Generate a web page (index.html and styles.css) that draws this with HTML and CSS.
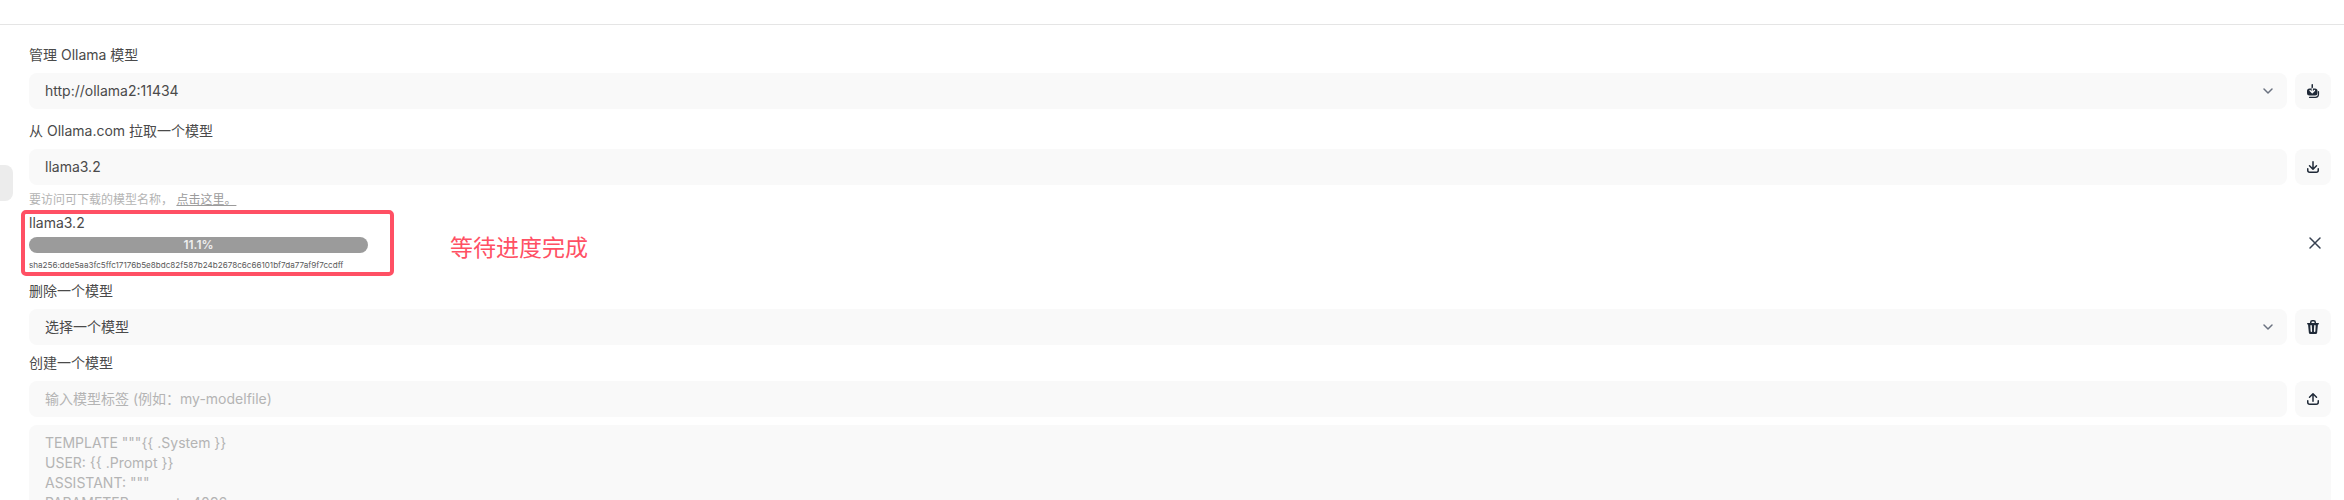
FILE: index.html
```html
<!DOCTYPE html>
<html lang="zh-CN">
<head>
    <meta charset="UTF-8">
    <title>Ollama 模型</title>
    <link rel="stylesheet" href="styles.css">
</head>
<body>
    <div class="topbar"></div>
    <div class="sideTab"></div>
    <div class="content">
        <div class="section">
            <div class="label">管理 Ollama 模型</div>
            <div class="row">
                <div class="field">
                    <span>http://ollama2:11434</span>
                    <svg class="chevron" viewBox="0 0 20 20"><path d="M6 8l4 4 4-4" fill="none" stroke="#6b7280" stroke-width="1.5" stroke-linecap="round" stroke-linejoin="round"/></svg>
                </div>
                <div class="iconBtn">
                    <svg viewBox="0 0 16 16">
                        <path d="M7.25 1a.75.75 0 0 0-.75.75V5.500h-2a2.500 2.500 0 0 0-2.500 2.500v2a2.500 2.500 0 0 0 2.500 2.500h5.500a2.500 2.500 0 0 0 2.500-2.500V8a2.500 2.500 0 0 0-2.500-2.500H8V1.750A.75.75 0 0 0 7.250 1Z"/>
                        <path d="M7.250 5.500v4M5 7.500l2.250 2.250L9.500 7.500" fill="none" stroke="#f9f9f9" stroke-width="1.300" stroke-linecap="round" stroke-linejoin="round"/>
                        <path d="M13.500 8.500v2.800c0 1.800-1.300 3-3 3H4.500" fill="none" stroke="#1f2937" stroke-width="1.200" stroke-linecap="round"/>
                    </svg>
                </div>
            </div>
        </div>
        <div class="section">
            <div class="label">从 Ollama.com 拉取一个模型</div>
            <div class="row">
                <div class="field"><span>llama3.2</span></div>
                <div class="iconBtn">
                    <svg viewBox="0 0 16 16"><path d="M8.75 2.750a.75.75 0 0 0-1.500 0v5.690L5.030 6.220a.75.75 0 0 0-1.060 1.060l3.500 3.500a.75.75 0 0 0 1.060 0l3.500-3.500a.75.75 0 0 0-1.060-1.060L8.750 8.440V2.750Z"/><path d="M3.500 9.750a.75.75 0 0 0-1.500 0v1.500A2.750 2.750 0 0 0 4.750 14h6.500A2.750 2.750 0 0 0 14 11.250v-1.500a.75.75 0 0 0-1.500 0v1.500c0 .690-.560 1.250-1.250 1.250h-6.500c-.690 0-1.250-.560-1.250-1.250v-1.500Z"/></svg>
                </div>
            </div>
            <div class="hint">要访问可下载的模型名称， <a>点击这里。</a></div>
        </div>
        <div class="progressRow">
            <div class="progressInfo">
                <div class="progressName">llama3.2</div>
                <div class="bar">11.1%</div>
                <div class="digest">sha256:dde5aa3fc5ffc17176b5e8bdc82f587b24b2678c6c66101bf7da77af9f7ccdff</div>
            </div>
            <div class="closeBtn">
                <svg viewBox="0 0 24 24"><path d="M6 6l12 12M18 6L6 18" fill="none" stroke="#374151" stroke-width="1.800" stroke-linecap="round"/></svg>
            </div>
            <div class="redBox"></div>
            <div class="note">等待进度完成</div>
        </div>
        <div class="section tight">
            <div class="label">删除一个模型</div>
            <div class="row">
                <div class="field">
                    <span>选择一个模型</span>
                    <svg class="chevron" viewBox="0 0 20 20"><path d="M6 8l4 4 4-4" fill="none" stroke="#6b7280" stroke-width="1.5" stroke-linecap="round" stroke-linejoin="round"/></svg>
                </div>
                <div class="iconBtn">
                    <svg viewBox="0 0 16 16"><path fill-rule="evenodd" d="M5 3.250V4H2.750a.75.75 0 0 0 0 1.500h.3l.815 8.150A1.500 1.500 0 0 0 5.357 15h5.285a1.500 1.500 0 0 0 1.493-1.350l.815-8.150h.3a.75.75 0 0 0 0-1.500H11v-.75A2.250 2.250 0 0 0 8.750 1h-1.500A2.250 2.250 0 0 0 5 3.250Zm2.250-.75a.75.75 0 0 0-.75.75V4h3v-.75a.75.75 0 0 0-.75-.75h-1.500ZM6.050 6a.75.75 0 0 1 .787.713l.275 5.500a.75.75 0 0 1-1.498.075l-.275-5.500A.75.75 0 0 1 6.050 6Zm3.900 0a.75.75 0 0 1 .712.787l-.275 5.500a.75.75 0 0 1-1.498-.075l.275-5.500a.75.75 0 0 1 .786-.711Z"/></svg>
                </div>
            </div>
        </div>
        <div class="section">
            <div class="label">创建一个模型</div>
            <div class="row">
                <div class="field placeholder"><span>输入模型标签 (例如：my-modelfile)</span></div>
                <div class="iconBtn">
                    <svg viewBox="0 0 16 16"><path d="M7.250 10.250a.75.75 0 0 0 1.500 0V4.560l2.220 2.220a.75.75 0 1 0 1.060-1.060l-3.500-3.500a.75.75 0 0 0-1.060 0l-3.500 3.500a.75.75 0 0 0 1.060 1.060l2.220-2.220v5.690Z"/><path d="M3.500 9.750a.75.75 0 0 0-1.500 0v1.500A2.750 2.750 0 0 0 4.750 14h6.500A2.750 2.750 0 0 0 14 11.250v-1.500a.75.75 0 0 0-1.500 0v1.500c0 .690-.560 1.250-1.250 1.250h-6.500c-.690 0-1.250-.560-1.250-1.250v-1.500Z"/></svg>
                </div>
            </div>
            <div class="template">TEMPLATE """{{ .System }}
USER: {{ .Prompt }}
ASSISTANT: """
PARAMETER num_ctx 4096</div>
        </div>
    </div>
</body>
</html>
```
FILE: styles.css
```css
*{
    margin: 0;
    padding: 0;
    box-sizing: border-box;
}
html,body{
    height: 500px;
    overflow: hidden;
}
body{
    position: relative;
    background-color: #fff;
    color: #4a4a4a;
    font-family: Inter, "Noto Sans CJK SC", sans-serif;
    font-size: 14px;
    line-height: 20px;
}
.topbar{
    height: 25px;
    border-bottom: 1px solid #e5e5e5;
}
.sideTab{
    position: absolute;
    left: 0;
    top: 165px;
    width: 13px;
    height: 36px;
    background-color: #ececec;
    border-radius: 0 8px 8px 0;
}
.content{
    padding: 20px 13px 0 29px;
}
.section{
    margin-bottom: 12px;
}
.tight{
    margin-bottom: 8px;
}
.label{
    margin-bottom: 8px;
}
.row{
    display: flex;
    gap: 8px;
}
.field{
    flex: 1;
    display: flex;
    align-items: center;
    justify-content: space-between;
    height: 36px;
    padding: 0 9px 0 16px;
    background-color: #f9f9f9;
    border-radius: 8px;
}
.placeholder{
    color: #b4b4b4;
}
.chevron{
    width: 20px;
    height: 20px;
}
.iconBtn{
    display: flex;
    align-items: center;
    justify-content: center;
    width: 36px;
    height: 36px;
    background-color: #f9f9f9;
    border-radius: 8px;
}
.iconBtn svg{
    width: 16px;
    height: 16px;
    fill: #1f2937;
}
.hint{
    margin-top: 7px;
    margin-bottom: -7px;
    color: #b4b4b4;
    font-size: 12px;
    line-height: 16px;
}
.hint a{
    color: #9b9b9b;
    text-decoration: underline;
}
.progressRow{
    position: relative;
    display: flex;
    justify-content: space-between;
    align-items: center;
    margin-bottom: 9px;
}
.progressName{
    height: 24px;
    line-height: 20px;
}
.bar{
    width: 339px;
    height: 16px;
    background-color: #9b9b9b;
    border-radius: 8px;
    color: #eee;
    font-size: 12px;
    font-weight: 600;
    line-height: 16px;
    text-align: center;
}
.digest{
    margin-top: 5px;
    font-size: 8.1px;
    line-height: 14px;
    color: #5a5a5a;
}
.closeBtn{
    display: flex;
    margin-right: 6px;
}
.closeBtn svg{
    width: 20px;
    height: 20px;
}
.redBox{
    position: absolute;
    left: -8px;
    top: -3px;
    width: 373px;
    height: 66px;
    border: 4px solid #ff5064;
    border-radius: 5px;
}
.note{
    position: absolute;
    left: 421px;
    top: 19px;
    color: #ff5064;
    font-size: 23px;
    line-height: 32px;
}
.template{
    margin-top: 8px;
    height: 200px;
    padding: 8px 16px;
    background-color: #f9f9f9;
    border-radius: 8px;
    color: #b4b4b4;
    white-space: pre-wrap;
}
```
